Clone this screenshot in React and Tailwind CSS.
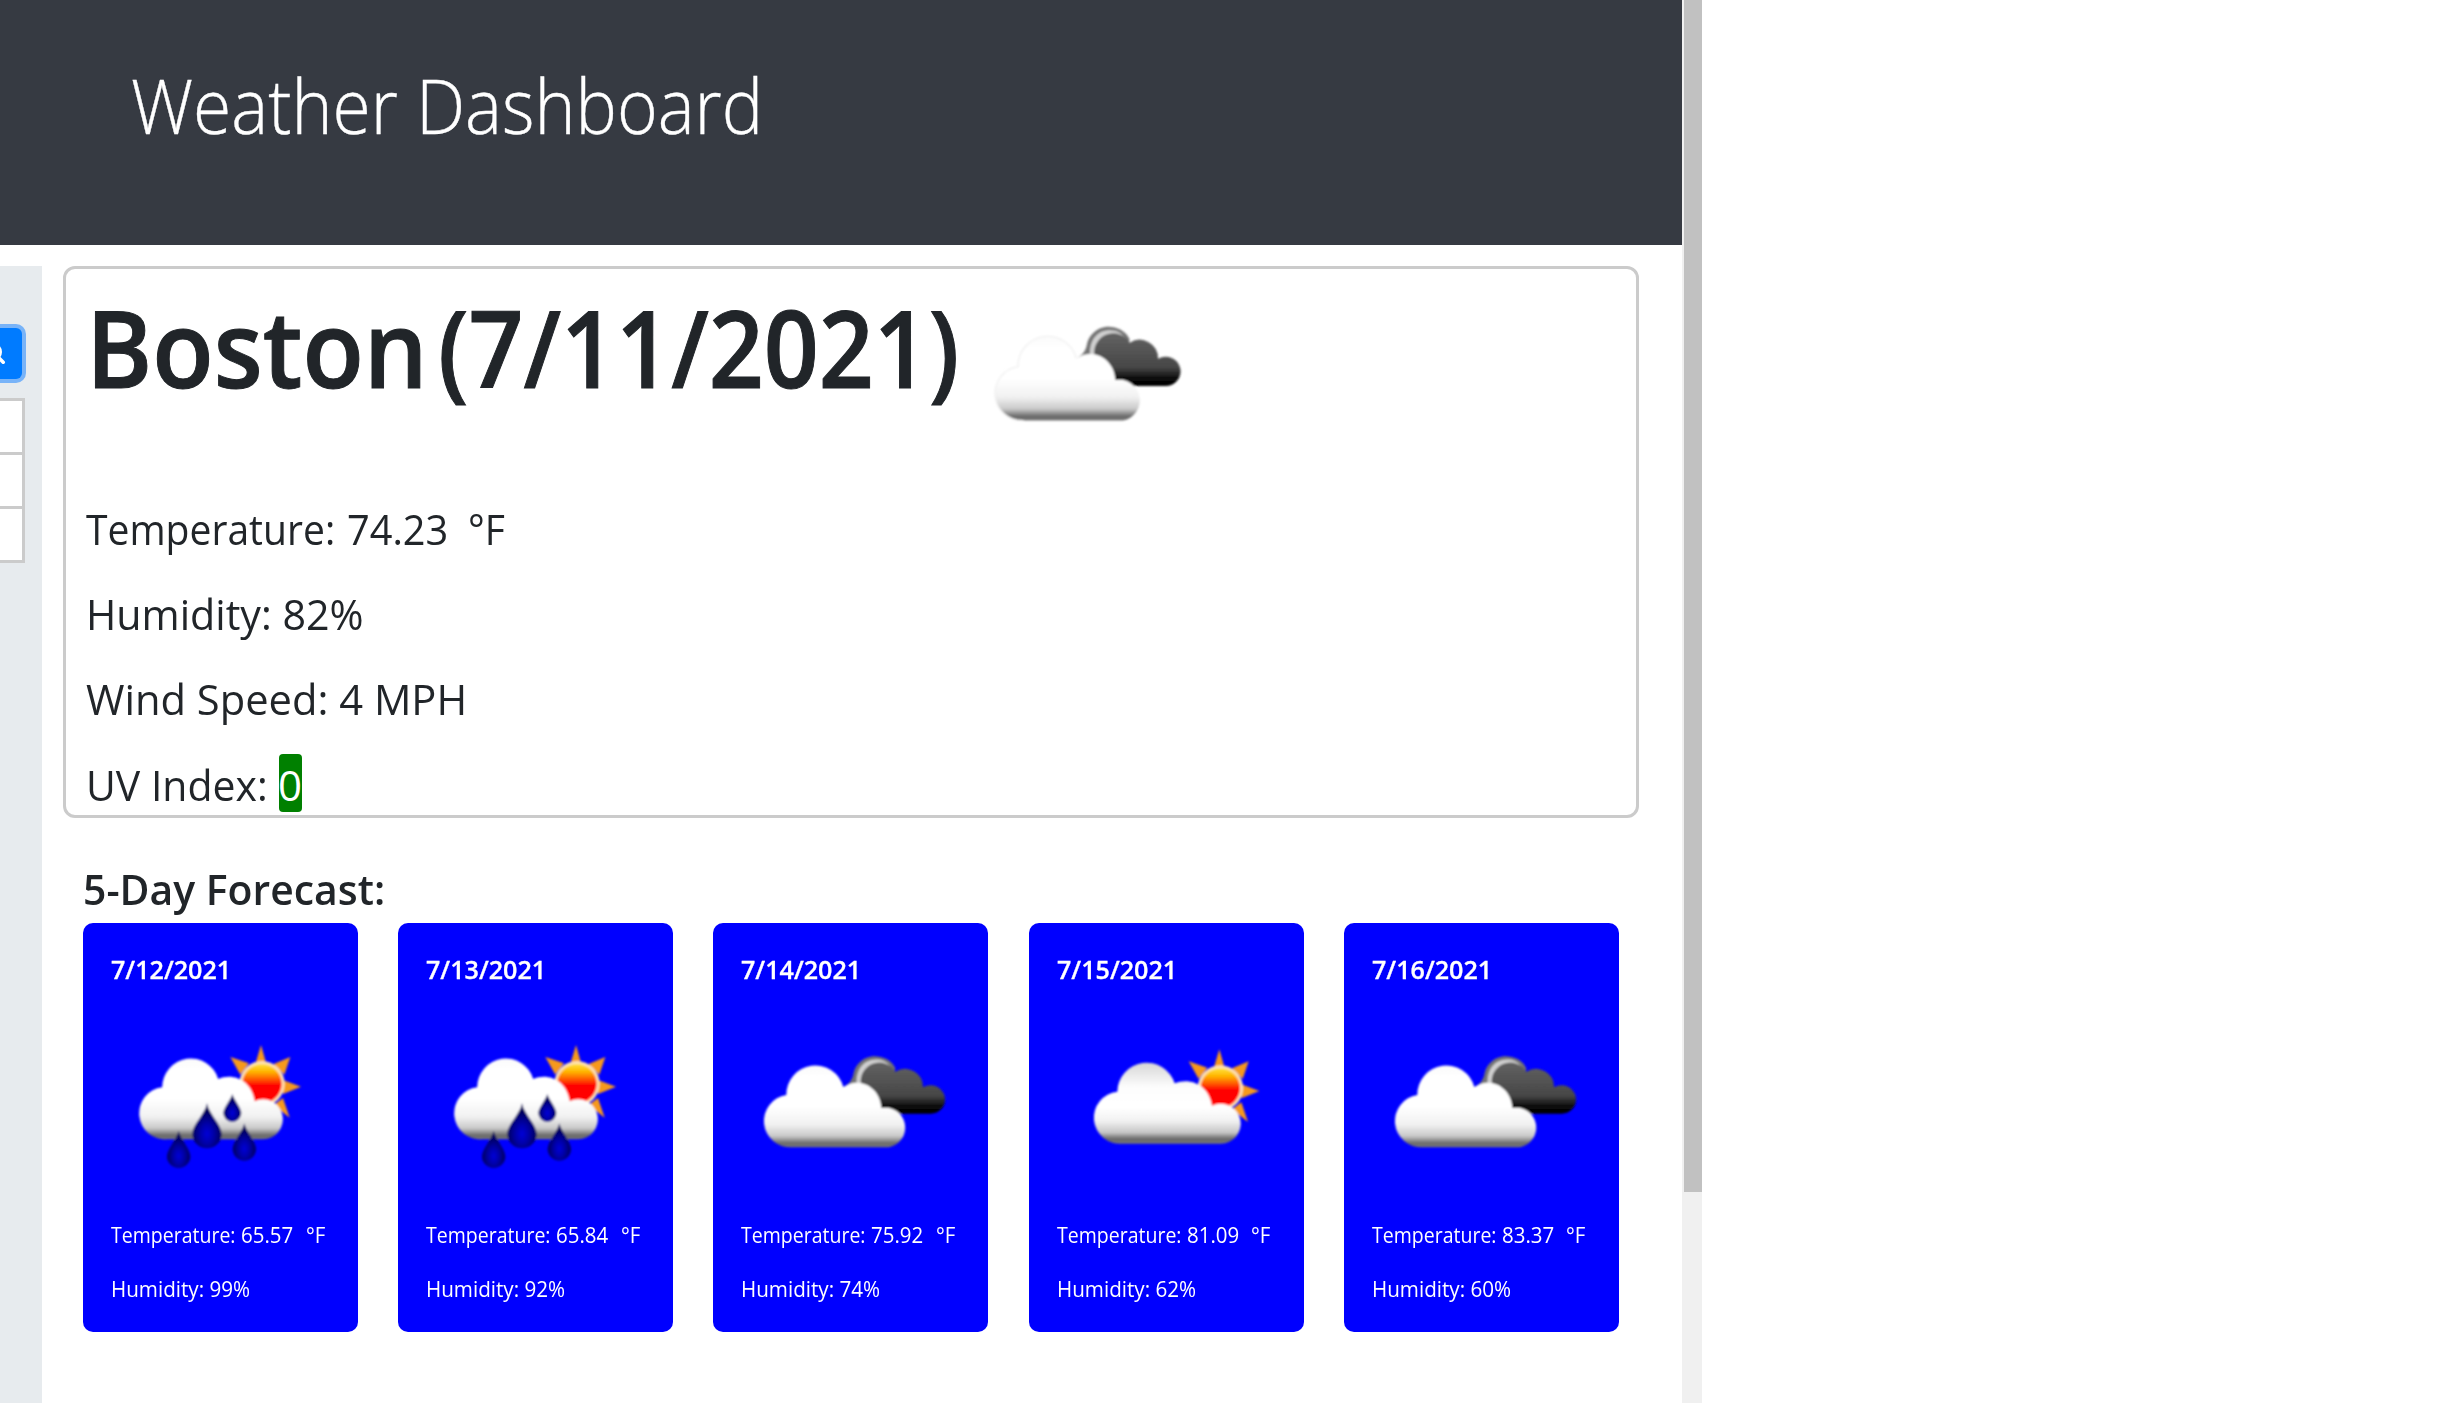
const CLOUD = 'M314 868 A78 78 0 0 1 298 712 A88 88 0 0 1 470 687 C515 668 572 690 582 754 A60 60 0 1 1 608 868 Z';

function Gradients({ id }) {
  return (
    <defs>
      <filter id={`${id}-soft`} x="-10%" y="-10%" width="120%" height="120%">
        <feGaussianBlur stdDeviation="3.5" />
      </filter>
      <linearGradient id={`${id}-white`} x1="0" y1="0" x2="0" y2="1">
        <stop offset="0" stopColor="#fbfbfb" />
        <stop offset="0.15" stopColor="#fff" />
        <stop offset="0.5" stopColor="#fff" />
        <stop offset="0.72" stopColor="#f1f1f1" />
        <stop offset="0.86" stopColor="#cacaca" />
        <stop offset="0.95" stopColor="#6a6a6a" />
        <stop offset="1" stopColor="#777" />
      </linearGradient>
      <linearGradient id={`${id}-shaded`} x1="0" y1="0" x2="0" y2="1">
        <stop offset="0" stopColor="#d6d6d6" />
        <stop offset="0.3" stopColor="#fdfdfd" />
        <stop offset="0.55" stopColor="#fff" />
        <stop offset="0.72" stopColor="#f1f1f1" />
        <stop offset="0.86" stopColor="#c6c6c6" />
        <stop offset="0.94" stopColor="#6a6a6a" />
        <stop offset="1" stopColor="#777" />
      </linearGradient>
      <linearGradient id={`${id}-dark`} x1="0" y1="0" x2="0" y2="1">
        <stop offset="0" stopColor="#626262" />
        <stop offset="0.65" stopColor="#474747" />
        <stop offset="0.85" stopColor="#0c0c0c" />
        <stop offset="1" stopColor="#000" />
      </linearGradient>
      <linearGradient id={`${id}-sun`} x1="0" y1="0" x2="0" y2="1">
        <stop offset="0" stopColor="#ffe23a" />
        <stop offset="0.2" stopColor="#ffb400" />
        <stop offset="0.42" stopColor="#ff4a00" />
        <stop offset="0.55" stopColor="#ff0000" />
        <stop offset="1" stopColor="#ff0000" />
      </linearGradient>
      <radialGradient id={`${id}-drop`} cx="0.5" cy="0.68" r="0.5">
        <stop offset="0" stopColor="#0000d8" />
        <stop offset="0.45" stopColor="#0000a8" />
        <stop offset="1" stopColor="#00005c" />
      </radialGradient>
    </defs>
  );
}

function BrokenClouds({ id, outline = 'none' }) {
  return (
    <g filter={`url(#${id}-soft)`}>
      <path d="M432 562 C450 550 458 538 461 520 A66 62 0 0 1 586 506 L560 600 L470 620 Z" fill="#747474" />
      <path d="M470 560 C466 520 482 484 522 480 C545 478 560 486 572 502 L560 600 L480 600 Z" fill="#d0d0d0" />
      <path d="M500 642 L690 642 A43 43 0 0 0 735 600 A43 43 0 0 0 690 557 Q680 557 669 563 A54 54 0 0 0 586 516 A56 56 0 0 0 482 545 Z" fill={`url(#${id}-dark)`} />
      <path d="M275 743 A79 79 0 0 1 259 586 A87 87 0 0 1 430 562 C485 526 543 570 544 625 A60 60 0 1 1 567 743 Z" fill={`url(#${id}-white)`} />
      <path d="M275 743 A79 79 0 0 1 259 586 A87 87 0 0 1 430 562" fill="none" stroke={outline} strokeWidth="4" />
    </g>
  );
}

function Sun({ id }) {
  return (
    <>
      <path
        d="M602 585 L619 645 L584 645 Z M510 621 L566 640 L540 674 Z M690 621 L672 674 L640 642 Z M722 710 L668 732 L668 690 Z M688 803 L640 765 L668 744 Z"
        fill="#f6991c"
      />
      <circle cx="605" cy="701" r="68" fill="#ffe2b4" />
      <circle cx="605" cy="701" r="59" fill={`url(#${id}-sun)`} />
    </>
  );
}

function Drop({ id, x, top, bottom, r }) {
  const cy = bottom - r;
  return <path d={`M${x} ${top} C${x + 5} ${top + r * 0.7} ${x + r} ${cy - r * 0.6} ${x + r} ${cy} A${r} ${r} 0 0 1 ${x - r} ${cy} C${x - r} ${cy - r * 0.6} ${x - 5} ${top + r * 0.7} ${x} ${top} Z`} fill={`url(#${id}-drop)`} />;
}

function RainIcon({ id }) {
  return (
    <g transform="translate(-68 -219)" filter={`url(#${id}-soft)`}>
      <Sun id={id} />
      <path d={CLOUD} transform="translate(14 0) scale(0.978 1)" fill={`url(#${id}-white)`} />
      <Drop id={id} x={440} top={760} bottom={895} r={44} />
      <Drop id={id} x={516} top={732} bottom={816} r={27} />
      <Drop id={id} x={355} top={842} bottom={954} r={35} />
      <Drop id={id} x={552} top={820} bottom={932} r={35} />
    </g>
  );
}

function SunCloudIcon({ id }) {
  return (
    <g transform="translate(-40 -206)" filter={`url(#${id}-soft)`}>
      <g transform="translate(9 0)">
        <Sun id={id} />
      </g>
      <path d={CLOUD} transform="translate(7 0)" fill={`url(#${id}-shaded)`} />
    </g>
  );
}

function CardIcon({ kind, id }) {
  return (
    <svg className="mt-[38px] block h-[160px] w-[247px]" viewBox="84 300 741 480">
      <Gradients id={id} />
      {kind === 'rain' && <RainIcon id={id} />}
      {kind === 'sun' && <SunCloudIcon id={id} />}
      {kind === 'clouds' && (
        <g transform="translate(-39 -70)">
          <BrokenClouds id={id} />
        </g>
      )}
    </svg>
  );
}

const DAYS = [
  { date: '7/12/2021', kind: 'rain', temp: '65.57', humidity: '99%' },
  { date: '7/13/2021', kind: 'rain', temp: '65.84', humidity: '92%' },
  { date: '7/14/2021', kind: 'clouds', temp: '75.92', humidity: '74%' },
  { date: '7/15/2021', kind: 'sun', temp: '81.09', humidity: '62%' },
  { date: '7/16/2021', kind: 'clouds', temp: '83.37', humidity: '60%' },
];

function DayCard({ day, id }) {
  return (
    <article className="h-[409px] rounded-[10px] bg-[#0000ff] pt-[30px] pl-7 text-white">
      <h4 className="origin-left scale-x-[0.966] text-[26px] leading-8 font-semibold [-webkit-text-stroke:0.3px]">{day.date}</h4>
      <CardIcon kind={day.kind} id={id} />
      <p className="mt-[35px] flex text-[22px] leading-8 whitespace-nowrap">
        <span className="w-[130px] origin-left scale-x-[0.887]">Temperature:</span>
        <span className="w-[64.5px] origin-left scale-x-[0.93]">{day.temp}</span>
        <span className="origin-left scale-x-[0.93]">°F</span>
      </p>
      <p className="mt-[22px] origin-left scale-x-[0.938] text-[22px] leading-8">Humidity: {day.humidity}</p>
    </article>
  );
}

function Sidebar() {
  return (
    <aside className="h-[1137px] w-[42px] shrink-0 bg-[#e7ebee] pt-[62px]">
      <button className="block h-[51px] w-[22px] rounded-r-[6px] bg-[#007bff] ring-4 ring-[#78b3f8]">
        <svg className="block h-[51px] w-[22px]" viewBox="0 0 22 51" fill="none" stroke="#fff" strokeLinecap="round">
          <circle cx="-7" cy="24" r="7.5" strokeWidth="3" />
          <path d="M-2 29 L3.2 34.2" strokeWidth="3.6" />
        </svg>
      </button>
      <ul className="mt-[19px] w-[25px] border-t-[3px] border-r-[3px] border-[#cbcbcb]">
        <li className="h-[54px] border-b-[3px] border-[#cbcbcb] bg-white" />
        <li className="h-[54px] border-b-[3px] border-[#cbcbcb] bg-white" />
        <li className="h-[54px] border-b-[3px] border-[#cbcbcb] bg-white" />
      </ul>
    </aside>
  );
}

function CurrentWeather() {
  return (
    <section className="h-[552px] w-[1576px] rounded-xl border-[3px] border-[#cbcbcb] pt-[14px] pl-5 whitespace-nowrap">
      <div className="flex h-[128px] text-[106px] leading-[128px] font-semibold">
        <h1 className="w-[352px] origin-left scale-x-[0.949] [-webkit-text-stroke:1px]">Boston</h1>
        <span className="w-[553px] origin-left scale-x-[0.908] [-webkit-text-stroke:1px]">(7/11/2021)</span>
        <svg className="mt-[37px] h-[103px] w-[193px]" viewBox="180 450 565 300" preserveAspectRatio="none">
          <Gradients id="now" />
          <BrokenClouds id="now" outline="#f0f0f0" />
        </svg>
      </div>
      <div className="mt-[88px] flex flex-col gap-[25.2px] text-[42px] leading-[60px]">
        <p className="flex">
          <span className="w-[261px] origin-left scale-x-[0.93]">Temperature:</span>
          <span className="w-[121px] origin-left scale-x-[0.945]">74.23</span>
          <span className="origin-left scale-x-[0.93]">°F</span>
        </p>
        <p className="origin-left scale-x-[0.98]">Humidity: 82%</p>
        <p className="origin-left scale-x-[0.992]">Wind Speed: 4 MPH</p>
        <p className="flex">
          <span className="w-[193px] origin-left scale-x-[0.975]">UV Index:</span>
          <span className="-mt-px h-[58px] w-[23px] rounded-[4px] bg-[#008000] text-center leading-[62px] text-white">
            <span className="-ml-px">0</span>
          </span>
        </p>
      </div>
    </section>
  );
}

export default function App() {
  return (
    <div className="flex h-[1403px] overflow-hidden bg-white font-['Open_Sans','Noto_Sans',sans-serif] text-[#212529]">
      <div className="w-[1682px] shrink-0">
        <header className="h-[245px] bg-[#363a42] pt-[59px] pl-[131px]">
          <h2 className="origin-left scale-x-[0.928] text-[75px] leading-[92px] font-light whitespace-nowrap text-white [-webkit-text-stroke:0.4px]">Weather Dashboard</h2>
        </header>
        <div className="mt-[21px] flex">
          <Sidebar />
          <main className="pl-[21px]">
            <CurrentWeather />
            <h3 className="mt-[46px] ml-5 h-[49px] origin-left scale-x-[0.974] text-[42px] leading-[50px] font-semibold">5-Day Forecast:</h3>
            <div className="mt-[10px] ml-5 grid w-[1535.8px] grid-cols-[repeat(5,275px)] justify-between">
              {DAYS.map((day, i) => (
                <DayCard key={day.date} day={day} id={`d${i}`} />
              ))}
            </div>
          </main>
        </div>
      </div>
      <div className="w-5 shrink-0 bg-[#f0f0f0] pl-[2px]">
        <div className="h-[1192px] bg-[#c1c1c1]" />
      </div>
    </div>
  );
}
